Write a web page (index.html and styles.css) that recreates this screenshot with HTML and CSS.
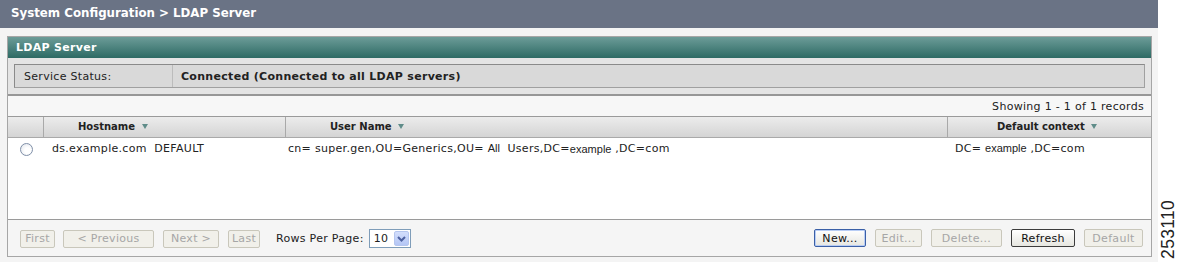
FILE: index.html
```html
<!DOCTYPE html>
<html>
<head>
<meta charset="utf-8">
<link rel="stylesheet" href="styles.css">
</head>
<body>
<div class="page">
  <div class="main">
    <div class="topbar">System Configuration &gt; LDAP Server</div>
    <div class="area">
      <div class="panel">
        <div class="panel-head">LDAP Server</div>
        <div class="status-wrap">
          <div class="status">
            <div class="status-label">Service Status:</div>
            <div class="status-value">Connected (Connected to all LDAP servers)</div>
          </div>
        </div>
        <div class="count">Showing 1 - 1 of 1 records</div>
        <div class="thead">
          <div class="th c0"></div>
          <div class="th c1">Hostname <span class="tri"></span></div>
          <div class="th c2">User Name <span class="tri"></span></div>
          <div class="th c3">Default context <span class="tri"></span></div>
        </div>
        <div class="tbody">
          <div class="tr">
            <div class="td c0"><span class="radio"></span></div>
            <div class="td c1">ds.example.com&nbsp; DEFAULT</div>
            <div class="td c2">cn= super.gen,OU=Generics,OU= <span class="alt">All</span>&nbsp; Users,DC=<span class="alt low">example</span> ,DC=com</div>
            <div class="td c3">DC= <span class="alt">example</span> ,DC=com</div>
          </div>
        </div>
        <div class="footer">
          <div class="pager">
            <button class="btn off w-first">First</button>
            <button class="btn off w-prev">&lt; Previous</button>
            <button class="btn off w-next">Next &gt;</button>
            <button class="btn off w-last">Last</button>
            <span class="rpp">Rows Per Page:</span>
            <span class="select"><span class="sel-val">10</span><span class="sel-btn"><svg width="9" height="6" viewBox="0 0 9 6"><path d="M1 1 L4.5 4.5 L8 1" fill="none" stroke="#4d61a0" stroke-width="2"/></svg></span></span>
          </div>
          <div class="actions">
            <button class="btn on focus w-new">New...</button>
            <button class="btn off w-edit">Edit...</button>
            <button class="btn off w-del">Delete...</button>
            <button class="btn on w-ref">Refresh</button>
            <button class="btn off w-def">Default</button>
          </div>
        </div>
      </div>
    </div>
  </div>
  <div class="side"><span class="fig">253110</span></div>
</div>
</body>
</html>
```
FILE: styles.css
```css
* { box-sizing: border-box; }
html, body { margin: 0; padding: 0; background: #fff; }
body { font-family: "DejaVu Sans", Verdana, sans-serif; font-size: 11px; letter-spacing: 0.3px; color: #222; }

.page { display: flex; width: 1179px; height: 262px; }
.main { width: 1158px; display: flex; flex-direction: column; }
.side { width: 21px; display: flex; align-items: flex-end; justify-content: center; padding-bottom: 3px; }
.fig { writing-mode: vertical-rl; transform: rotate(180deg); font-family: "Liberation Sans", Arial, sans-serif; font-size: 17.5px; color: #222; letter-spacing: 0.3px; }

.topbar { height: 28px; background: #6a7385; color: #fff; font-weight: bold; font-size: 11.8px; letter-spacing: 0; padding: 6px 0 0 11px; }

.area { flex: 1; background: #f4f4f4; padding: 8px 6px 5px 7px; }
.panel { border: 1px solid #a6a6a6; background: #fff; display: flex; flex-direction: column; }

.panel-head { height: 21px; background: linear-gradient(#6c9c98, #2d6a64); color: #fff; font-weight: bold; font-size: 11px; padding: 4px 0 0 8px; letter-spacing: 0.3px; }

.status-wrap { background: #e4e4e4; padding: 6px 6px 6px 6px; border-bottom: 2px solid #979797; }
.status { height: 24px; display: flex; align-items: center; background: #d9d9d9; border: 1px solid #a0a0a0; border-top-color: #8a8a8a; border-left-color: #8a8a8a; }
.status-label { width: 158px; height: 100%; display: flex; align-items: center; padding-left: 9px; border-right: 1px solid #bcbcbc; }
.status-value { padding-left: 8px; font-weight: bold; letter-spacing: 0.3px; }

.count { height: 21px; background: #f7f7f7; border-bottom: 1px solid #9a9a9a; text-align: right; padding: 4px 7px 0 0; }

.thead { display: grid; grid-template-columns: 35px 242px 662px 1fr; height: 21px; background: linear-gradient(#ececec, #d4d4d4); border-bottom: 1px solid #a9a9a9; }
.th { font-weight: bold; font-size: 10px; letter-spacing: 0; padding-top: 4px; border-left: 1px solid #a9a9a9; white-space: nowrap; }
.th.c0 { border-left: none; }
.th.c1 { padding-left: 34px; }
.th.c2 { padding-left: 44px; }
.th.c3 { padding-left: 49px; }
.tri { display: inline-block; width: 0; height: 0; border-left: 3.5px solid transparent; border-right: 3.5px solid transparent; border-top: 5px solid #5f8c89; margin-left: 3px; vertical-align: 1px; }

.tbody { height: 82px; background: #fff; border-bottom: 1px solid #9a9a9a; }
.tr { display: grid; grid-template-columns: 35px 242px 662px 1fr; height: 20px; align-items: center; }
.td { white-space: nowrap; }
.td.c0 { padding-left: 12px; display: flex; align-items: center; }
.td.c1 { padding-left: 9px; }
.td.c2 { padding-left: 3px; }
.td.c3 { padding-left: 8px; }
.alt { font-family: "Liberation Sans", Arial, sans-serif; font-size: 11px; letter-spacing: 0; }
.low { position: relative; top: 1px; }
.radio { width: 13px; height: 13px; border-radius: 50%; border: 1px solid #7f8fa8; background: radial-gradient(circle at 60% 60%, #fff 30%, #dfe3ea 100%); margin-top: 2px; }

.footer { height: 36px; background: #f5f5f5; display: flex; justify-content: space-between; align-items: flex-start; padding: 9px 8px 0 12px; }
.pager, .actions { display: flex; align-items: center; gap: 9px; }
.btn { height: 18px; font-family: "DejaVu Sans", Verdana, sans-serif; font-size: 11px; letter-spacing: 0.3px; padding: 0; border-radius: 2px; }
.btn.off { background: #f1f0ea; border: 1px solid #c9c7bb; color: #a6a6a6; }
.btn.on { background: linear-gradient(#ffffff, #e6e6e0); border: 1px solid #3c3c3c; color: #111; }
.btn.focus { border-color: #3a5fa6; box-shadow: inset 0 0 0 1px #b8cdf5; }
.w-first { width: 35px; }
.w-prev { width: 91px; margin-left: -1px; }
.w-next { width: 56px; }
.w-last { width: 32px; }
.rpp { margin-left: 7px; }
.select { margin-left: -4px; width: 42px; height: 19px; border: 1px solid #7f9db9; background: #fff; display: flex; align-items: center; justify-content: space-between; padding: 1px; }
.sel-val { padding-left: 3px; font-size: 11px; }
.sel-btn { width: 15px; height: 15px; background: linear-gradient(#d3defc, #b4c6f5); border: 1px solid #b5c6ef; border-radius: 2px; display: flex; align-items: center; justify-content: center; }
.w-new { width: 52px; }
.w-edit { width: 47px; }
.w-del { width: 71px; }
.w-ref { width: 64px; }
.w-def { width: 59px; }
```
